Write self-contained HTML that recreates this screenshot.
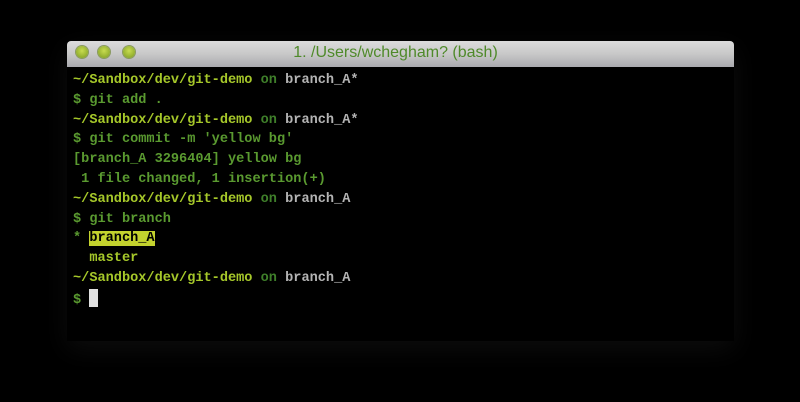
<!DOCTYPE html>
<html><head><style>
body{margin:0;width:800px;height:402px;background:#000;overflow:hidden;position:relative;font-family:"Liberation Mono",monospace}
.win{position:absolute;left:67px;top:41px;width:667px;height:300px;background:#000;box-shadow:0 8px 25px rgba(25,25,25,.5)}
.tb{height:26px;background:linear-gradient(#dcdcdc,#c8c8c8 50%,#a9a9ae);border-radius:4px 4px 0 0;position:relative}
.b{position:absolute;top:5px;width:12px;height:12px;border-radius:50%;background:radial-gradient(circle at 50% 40%,#c8dc50,#7a9a20);box-shadow:0 0 0 1px #8a9a60}
.t{position:absolute;left:0;right:0;top:3px;text-align:center;font-family:"Liberation Sans",sans-serif;font-size:16px;color:#4f8a2a;padding-right:10px}
.term{position:absolute;left:6px;top:30px;font-size:13.6px;line-height:19.8px;font-weight:bold;white-space:pre;color:#5a9a30}
.p{color:#a6c82a}.o{color:#3f7f2a}.g{color:#b4b4b4}
.h{background:#c3d22e;color:#000}
.c{display:inline-block;width:9px;height:18px;background:#e0e0e0;vertical-align:-4px}
</style></head><body>
<div class="win">
<div class="tb"><div class="b" style="left:9px"></div><div class="b" style="left:31px"></div><div class="b" style="left:56px"></div><div class="t">1. /Users/wchegham? (bash)</div></div>
<div class="term"><span class="p">~/Sandbox/dev/git-demo</span> <span class="o">on</span> <span class="g">branch_A*</span>
$ git add .
<span class="p">~/Sandbox/dev/git-demo</span> <span class="o">on</span> <span class="g">branch_A*</span>
$ git commit -m 'yellow bg'
[branch_A 3296404] yellow bg
 1 file changed, 1 insertion(+)
<span class="p">~/Sandbox/dev/git-demo</span> <span class="o">on</span> <span class="g">branch_A</span>
$ git branch
* <span class="h">branch_A</span>
  <span class="p">master</span>
<span class="p">~/Sandbox/dev/git-demo</span> <span class="o">on</span> <span class="g">branch_A</span>
$ <span class="c"></span></div>
</div>
</body></html>
